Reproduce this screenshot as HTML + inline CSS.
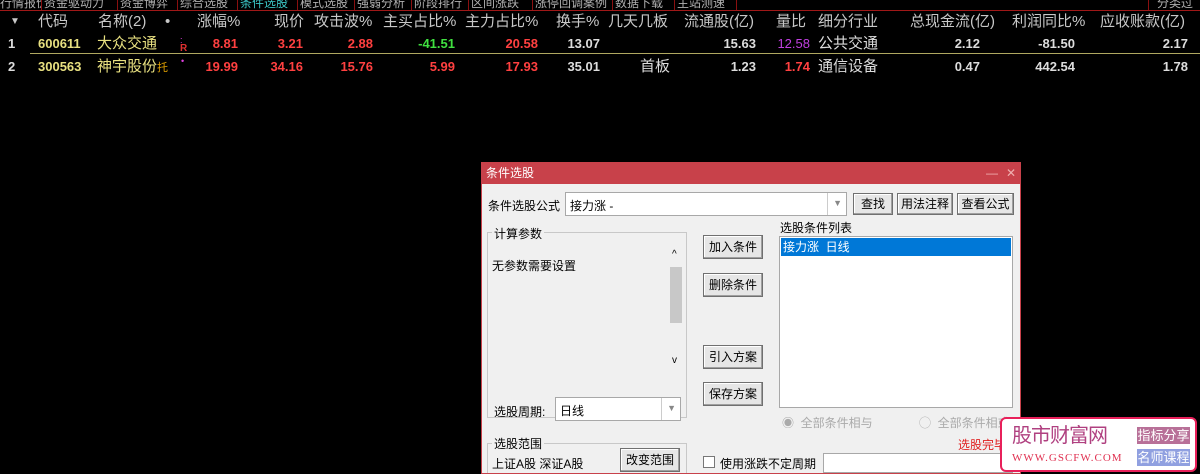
<!DOCTYPE html>
<html><head><meta charset="utf-8"><style>
*{margin:0;padding:0;box-sizing:border-box}
html,body{width:1200px;height:474px;overflow:hidden}
body{background:#000;position:relative;font-family:"Liberation Sans","Noto Sans CJK SC",sans-serif}
.a{position:absolute;white-space:nowrap}
.tab{position:absolute;top:-4px;height:14px;font-size:12px;color:#b0b0b0;line-height:14px;border-right:1px solid #8a1010;white-space:nowrap;overflow:hidden}
.h{position:absolute;top:12px;font-size:15px;color:#c8c8c8;line-height:20px;white-space:nowrap}
.r{position:absolute;font-size:13px;font-weight:bold;line-height:20px;text-align:right}
.c{position:absolute;font-size:15px;line-height:20px;white-space:nowrap}
.dlg{position:absolute;left:481px;top:162px;width:540px;height:312px;background:#f0f0f0;border:1px solid #c8414a;overflow:hidden}
.t{font-size:12px;color:#000;position:absolute;white-space:nowrap}
.btn{position:absolute;background:#e6e6e6;border:1px solid #707070;font-size:12px;text-align:center;line-height:20px;box-shadow:inset -1px -1px 0 #a0a0a0,inset 1px 1px 0 #fff}
.box{position:absolute;background:#fff;border:1px solid #a8a8a8}
</style></head><body>
<div class="tab" style="left:0;width:42px">行情报价</div>
<div class="tab" style="left:44px;width:74px">资金驱动力</div>
<div class="tab" style="left:120px;width:58px">资金博弈</div>
<div class="tab" style="left:180px;width:58px">综合选股</div>
<div class="tab" style="left:240px;width:58px;color:#3cc8c8">条件选股</div>
<div class="tab" style="left:300px;width:55px">模式选股</div>
<div class="tab" style="left:357px;width:55px">强弱分析</div>
<div class="tab" style="left:414px;width:55px">阶段排行</div>
<div class="tab" style="left:471px;width:62px">区间涨跌</div>
<div class="tab" style="left:535px;width:78px">涨停回调案例</div>
<div class="tab" style="left:615px;width:60px">数据下载</div>
<div class="tab" style="left:677px;width:60px">主站测速</div>
<div class="tab" style="left:1148px;width:60px;border-left:1px solid #8a1010;padding-left:8px">分类过</div>
<div class="a" style="left:0;top:10px;width:1200px;height:1px;background:#a01818"></div>

<div class="h" style="left:10px;font-size:10px">▼</div>
<div class="h" style="left:38px">代码</div>
<div class="h" style="left:98px">名称(2)</div>
<div class="h" style="left:165px">•</div>
<div class="h" style="left:197px">涨幅%</div>
<div class="h" style="left:274px">现价</div>
<div class="h" style="left:314px">攻击波%</div>
<div class="h" style="left:383px">主买占比%</div>
<div class="h" style="left:465px">主力占比%</div>
<div class="h" style="left:556px">换手%</div>
<div class="h" style="left:608px">几天几板</div>
<div class="h" style="left:684px">流通股(亿)</div>
<div class="h" style="left:776px">量比</div>
<div class="h" style="left:818px">细分行业</div>
<div class="h" style="left:910px">总现金流(亿)</div>
<div class="h" style="left:1012px">利润同比%</div>
<div class="h" style="left:1100px">应收账款(亿)</div>

<div class="r" style="left:8px;top:34px;color:#ddd">1</div>
<div class="r" style="left:38px;top:34px;color:#e8e080">600611</div>
<div class="c" style="left:97px;top:34px;color:#e8e080">大众交通</div>
<div class="a" style="left:180px;top:36px;font-size:9px;color:#e040e0;line-height:8px">:<br><span style="color:#e03030;font-weight:bold;font-size:10px">R</span></div>
<div class="r" style="left:190px;top:34px;width:48px;color:#ff4040">8.81</div>
<div class="r" style="left:250px;top:34px;width:53px;color:#ff4040">3.21</div>
<div class="r" style="left:310px;top:34px;width:63px;color:#ff4040">2.88</div>
<div class="r" style="left:380px;top:34px;width:75px;color:#40e040">-41.51</div>
<div class="r" style="left:460px;top:34px;width:78px;color:#ff4040">20.58</div>
<div class="r" style="left:540px;top:34px;width:60px;color:#ddd">13.07</div>
<div class="r" style="left:680px;top:34px;width:76px;color:#ddd">15.63</div>
<div class="r" style="left:760px;top:34px;width:50px;color:#c040e0;font-weight:normal">12.58</div>
<div class="c" style="left:818px;top:34px;color:#ddd">公共交通</div>
<div class="r" style="left:900px;top:34px;width:80px;color:#ddd">2.12</div>
<div class="r" style="left:1000px;top:34px;width:75px;color:#ddd">-81.50</div>
<div class="r" style="left:1100px;top:34px;width:88px;color:#ddd">2.17</div>
<div class="a" style="left:30px;top:53px;width:1170px;height:1px;background:#b0a860"></div>

<div class="r" style="left:8px;top:57px;color:#ddd">2</div>
<div class="r" style="left:38px;top:57px;color:#e8e080">300563</div>
<div class="c" style="left:97px;top:57px;color:#e8e080">神宇股份<span style="font-size:11px;color:#e0a000">托</span></div>
<div class="a" style="left:181px;top:56px;font-size:9px;color:#e040e0">•</div>
<div class="r" style="left:190px;top:57px;width:48px;color:#ff4040">19.99</div>
<div class="r" style="left:250px;top:57px;width:53px;color:#ff4040">34.16</div>
<div class="r" style="left:310px;top:57px;width:63px;color:#ff4040">15.76</div>
<div class="r" style="left:380px;top:57px;width:75px;color:#ff4040">5.99</div>
<div class="r" style="left:460px;top:57px;width:78px;color:#ff4040">17.93</div>
<div class="r" style="left:540px;top:57px;width:60px;color:#ddd">35.01</div>
<div class="c" style="left:640px;top:57px;color:#ddd">首板</div>
<div class="r" style="left:680px;top:57px;width:76px;color:#ddd">1.23</div>
<div class="r" style="left:760px;top:57px;width:50px;color:#ff4040">1.74</div>
<div class="c" style="left:818px;top:57px;color:#ddd">通信设备</div>
<div class="r" style="left:900px;top:57px;width:80px;color:#ddd">0.47</div>
<div class="r" style="left:1000px;top:57px;width:75px;color:#ddd">442.54</div>
<div class="r" style="left:1100px;top:57px;width:88px;color:#ddd">1.78</div>

<div class="dlg">
 <div class="a" style="left:0;top:0;width:538px;height:21px;background:#c8414a;color:#fff;font-size:12px;line-height:21px;padding-left:4px">条件选股<span style="position:absolute;right:22px;color:#f0b0b0">—</span><span style="position:absolute;right:4px;color:#f0b0b0">✕</span></div>
 <div class="t" style="left:6px;top:34px">条件选股公式</div>
 <div class="box" style="left:83px;top:29px;width:282px;height:24px"><span class="t" style="left:4px;top:4px">接力涨 -</span><span class="t" style="right:4px;top:5px;color:#888;font-size:9px">▼</span><div class="a" style="right:18px;top:0;width:1px;height:22px;background:#ccc"></div></div>
 <div class="btn" style="left:371px;top:30px;width:40px;height:22px">查找</div>
 <div class="btn" style="left:415px;top:30px;width:56px;height:22px">用法注释</div>
 <div class="btn" style="left:475px;top:30px;width:57px;height:22px">查看公式</div>
 <div class="a" style="left:5px;top:69px;width:200px;height:186px;border:1px solid #c8c8c8"></div>
 <div class="t" style="left:10px;top:62px;background:#f0f0f0;padding:0 2px">计算参数</div>
 <div class="t" style="left:10px;top:94px">无参数需要设置</div>
 <div class="t" style="left:190px;top:86px;font-size:10px">^</div>
 <div class="a" style="left:188px;top:104px;width:12px;height:56px;background:#c8c8c8"></div>
 <div class="t" style="left:190px;top:192px;font-size:10px">v</div>
 <div class="t" style="left:12px;top:240px">选股周期:</div>
 <div class="box" style="left:73px;top:234px;width:126px;height:24px"><span class="t" style="left:4px;top:4px">日线</span><span class="t" style="right:4px;top:5px;color:#888;font-size:9px">▼</span><div class="a" style="right:18px;top:0;width:1px;height:22px;background:#ccc"></div></div>
 <div class="a" style="left:5px;top:280px;width:200px;height:50px;border:1px solid #c8c8c8"></div>
 <div class="t" style="left:10px;top:272px;background:#f0f0f0;padding:0 2px">选股范围</div>
 <div class="t" style="left:10px;top:292px">上证A股 深证A股</div>
 <div class="btn" style="left:138px;top:285px;width:60px;height:24px;line-height:22px">改变范围</div>
 <div class="btn" style="left:221px;top:72px;width:60px;height:24px;line-height:22px">加入条件</div>
 <div class="btn" style="left:221px;top:110px;width:60px;height:24px;line-height:22px">删除条件</div>
 <div class="btn" style="left:221px;top:182px;width:60px;height:24px;line-height:22px">引入方案</div>
 <div class="btn" style="left:221px;top:219px;width:60px;height:24px;line-height:22px">保存方案</div>
 <div class="t" style="left:298px;top:56px">选股条件列表</div>
 <div class="box" style="left:297px;top:73px;width:234px;height:172px"><div class="a" style="left:1px;top:1px;width:230px;height:18px;background:#0078d7;color:#fff;font-size:12px;line-height:18px;padding-left:2px">接力涨&nbsp; 日线</div></div>
 <div class="t" style="left:300px;top:251px;color:#aaa">◉&nbsp; 全部条件相与</div>
 <div class="t" style="left:437px;top:251px;color:#aaa">◯&nbsp; 全部条件相或</div>
 <div class="t" style="left:476px;top:273px;color:#e02020">选股完毕</div>
 <div class="a" style="left:221px;top:293px;width:12px;height:12px;border:1px solid #777;background:#fff"></div>
 <div class="t" style="left:238px;top:292px">使用涨跌不定周期</div>
 <div class="box" style="left:341px;top:290px;width:190px;height:20px"></div>
</div>

<div class="a" style="left:1000px;top:417px;width:197px;height:55px;background:#fff;border:2px solid #e8205a;border-radius:6px;overflow:hidden">
 <div class="a" style="left:10px;top:5px;font-size:20px;color:#b04080;letter-spacing:-1px;line-height:24px">股市财富网</div>
 <div class="a" style="left:10px;top:33px;font-family:'Liberation Serif',serif;font-size:11px;color:#e03050;letter-spacing:1px">WWW.GSCFW.COM</div>
 <div class="a" style="left:135px;top:8px;width:53px;height:17px;background:#b87098;color:#fff;font-size:13px;line-height:17px;text-align:center">指标分享</div>
 <div class="a" style="left:135px;top:30px;width:53px;height:17px;background:#90a0e0;color:#fff;font-size:13px;line-height:17px;text-align:center">名师课程</div>
</div>
</body></html>
